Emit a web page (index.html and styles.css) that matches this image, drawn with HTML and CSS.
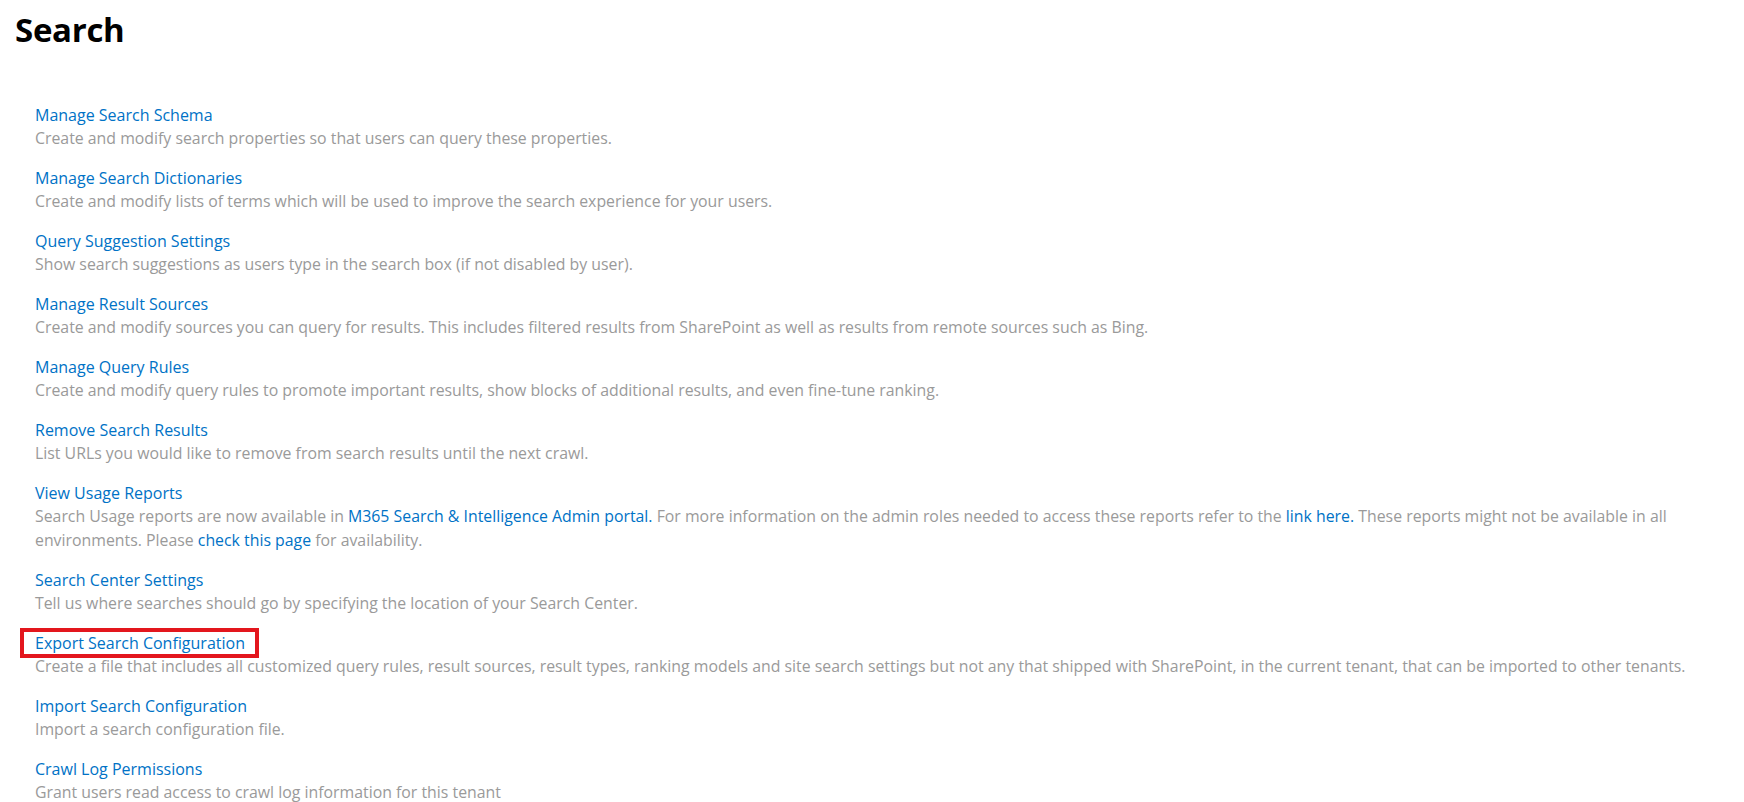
FILE: index.html
```html
<!DOCTYPE html>
<html lang="en">
<head>
<meta charset="utf-8">
<title>Search</title>
<link rel="stylesheet" href="styles.css">
</head>
<body>
<main class="page">
  <h1 class="page-title">Search</h1>
  <ul class="link-list">
    <li class="link-item">
      <a class="link-title" href="#">Manage Search Schema</a>
      <div class="link-desc">Create and modify search properties so that users can query these properties.</div>
    </li>
    <li class="link-item">
      <a class="link-title" href="#">Manage Search Dictionaries</a>
      <div class="link-desc">Create and modify lists of terms which will be used to improve the search experience for your users.</div>
    </li>
    <li class="link-item">
      <a class="link-title" href="#">Query Suggestion Settings</a>
      <div class="link-desc">Show search suggestions as users type in the search box (if not disabled by user).</div>
    </li>
    <li class="link-item">
      <a class="link-title" href="#">Manage Result Sources</a>
      <div class="link-desc">Create and modify sources you can query for results. This includes filtered results from SharePoint as well as results from remote sources such as Bing.</div>
    </li>
    <li class="link-item">
      <a class="link-title" href="#">Manage Query Rules</a>
      <div class="link-desc">Create and modify query rules to promote important results, show blocks of additional results, and even fine-tune ranking.</div>
    </li>
    <li class="link-item">
      <a class="link-title" href="#">Remove Search Results</a>
      <div class="link-desc">List URLs you would like to remove from search results until the next crawl.</div>
    </li>
    <li class="link-item">
      <a class="link-title" href="#">View Usage Reports</a>
      <div class="link-desc"><span>Search Usage reports are now available in</span> <a class="inline-link" href="#">M365 Search &amp; Intelligence Admin portal.</a> <span>For more information on the admin roles needed to access these reports refer to the</span> <a class="inline-link" href="#">link here.</a> <span>These reports might not be available in all</span> <span>environments. Please</span> <a class="inline-link" href="#">check this page</a> <span>for availability.</span></div>
    </li>
    <li class="link-item">
      <a class="link-title" href="#">Search Center Settings</a>
      <div class="link-desc">Tell us where searches should go by specifying the location of your Search Center.</div>
    </li>
    <li class="link-item">
      <a class="link-title highlighted" href="#">Export Search Configuration</a>
      <div class="link-desc">Create a file that includes all customized query rules, result sources, result types, ranking models and site search settings but not any that shipped with SharePoint, in the current tenant, that can be imported to other tenants.</div>
    </li>
    <li class="link-item">
      <a class="link-title" href="#">Import Search Configuration</a>
      <div class="link-desc">Import a search configuration file.</div>
    </li>
    <li class="link-item">
      <a class="link-title" href="#">Crawl Log Permissions</a>
      <div class="link-desc">Grant users read access to crawl log information for this tenant</div>
    </li>
  </ul>
</main>
</body>
</html>
```
FILE: styles.css
```css
html, body {
  margin: 0;
  padding: 0;
  background: #ffffff;
}

body {
  font-family: "Open Sans", "Noto Sans", "Liberation Sans", sans-serif;
  color: #444444;
}

.page {
  padding: 8px 20px 0 15px;
}

.page-title {
  margin: 0;
  font-size: 33px;
  font-weight: 700;
  line-height: 44px;
  color: #000000;
  letter-spacing: -0.3px;
}

.link-list {
  list-style: none;
  margin: 52px 0 0 0;
  padding: 0 0 0 20px;
  display: flex;
  flex-direction: column;
  gap: 17px;
}

.link-item {
  display: flex;
  flex-direction: column;
  align-items: flex-start;
}

.link-title {
  font-size: 16px;
  line-height: 22px;
  color: #0072c6;
  text-decoration: none;
}

.link-title.highlighted {
  outline: 4px solid #e3161d;
  outline-offset: 0;
  padding: 0 10px 0 11px;
  margin: 0 -10px 0 -11px;
}

.link-desc {
  font-size: 15.85px;
  line-height: 24px;
  color: #9a9a9a;
}

.inline-link {
  color: #0072c6;
  text-decoration: none;
}
```
